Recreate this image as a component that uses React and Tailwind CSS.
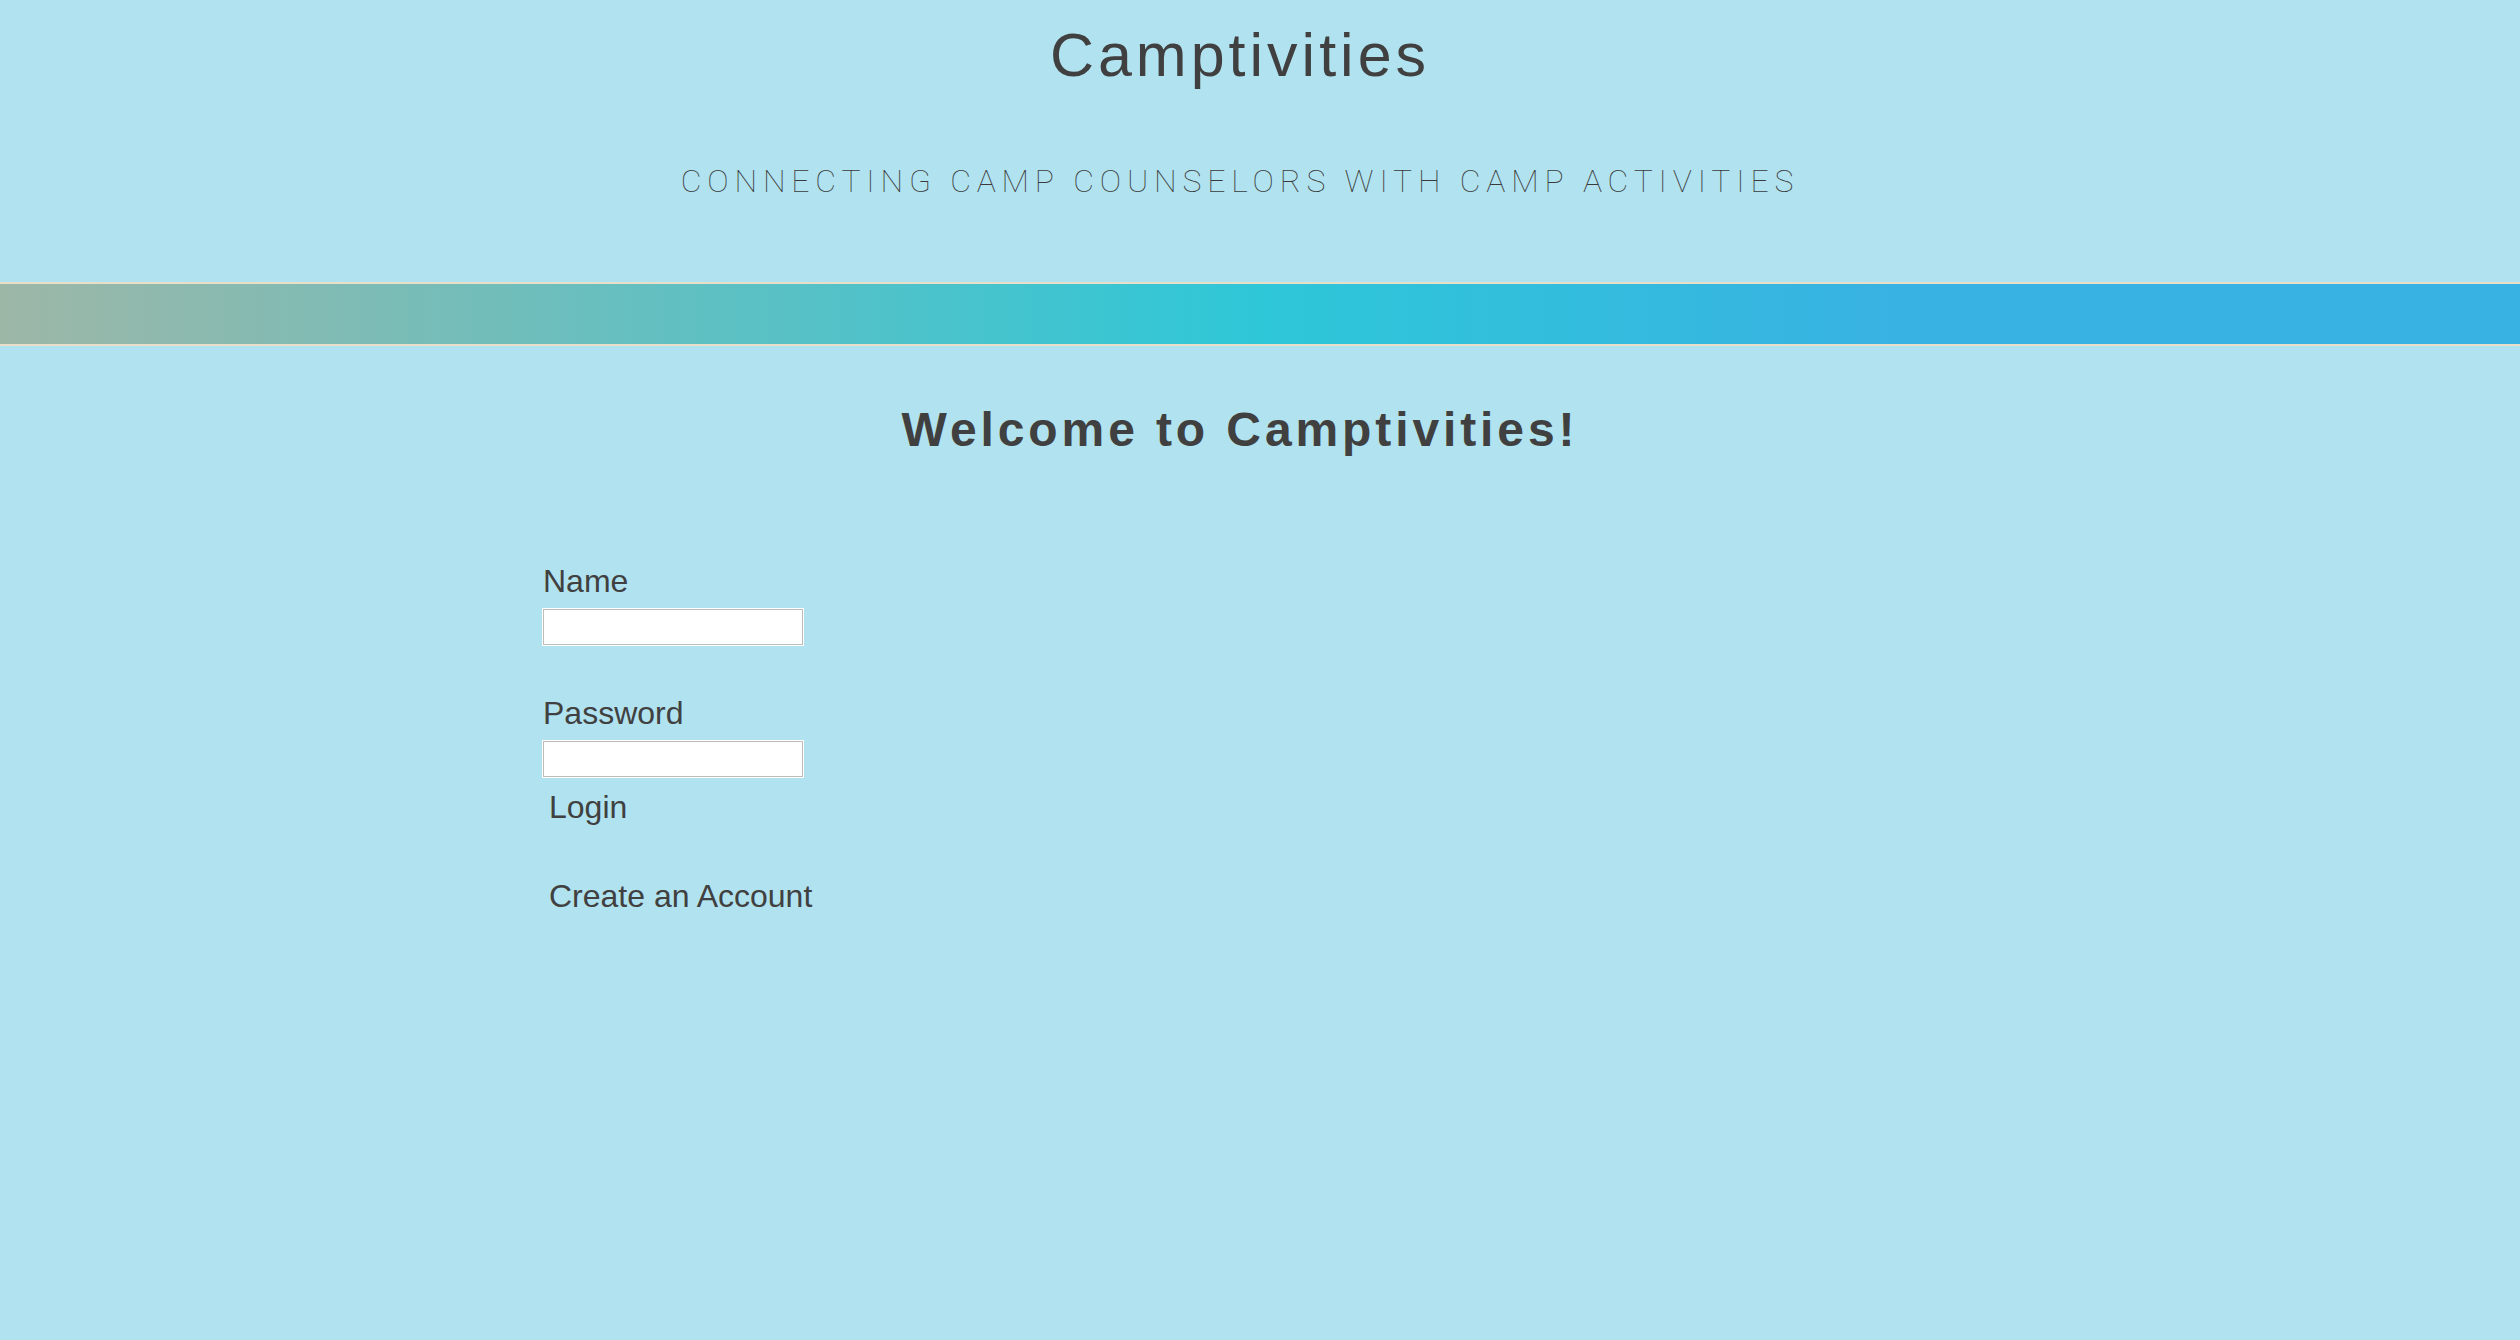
export default function App() {
  return (
    <div className="min-h-[1340px] bg-[#b1e2ef] font-['Liberation_Sans',Arial,sans-serif] text-[#404040]">
      <header className="pr-[40px] text-center">
        <h1 className="pt-[20px] text-[61px] leading-[70px] tracking-[4px]">Camptivities</h1>
        <p className="mt-[73px] font-['Roboto',sans-serif] text-[32px] font-thin leading-[36px] tracking-[5.8px] text-[#3a3a3a]">
          CONNECTING CAMP COUNSELORS WITH CAMP ACTIVITIES
        </p>
      </header>

      <div className="mt-[83px] h-[64px] border-y-2 border-[#e8dfc8] bg-[linear-gradient(90deg,#9db7a7_0%,#2ec7d8_50%,#38b2e2_75%,#38b2e2_100%)]" />

      <h2 className="mt-[56px] pr-[40px] text-center text-[48px] font-bold leading-[56px] tracking-[3.9px]">
        Welcome to Camptivities!
      </h2>

      <form className="mt-[105px] flex flex-col items-start pl-[543px]" onSubmit={(e) => e.preventDefault()}>
        <label className="text-[32px] leading-[36px]">Name</label>
        <input type="text" className="mt-[10px] h-[36px] w-[260px] border border-[#bdbdbd] bg-white ring-1 ring-white" />

        <label className="mt-[50px] text-[32px] leading-[36px]">Password</label>
        <input type="password" className="mt-[10px] h-[36px] w-[260px] border border-[#bdbdbd] bg-white ring-1 ring-white" />

        <button type="submit" className="mt-[12px] pl-[6px] text-[32px] leading-[36px]">
          Login
        </button>
        <button type="button" className="mt-[53px] pl-[6px] text-[32px] leading-[36px]">
          Create an Account
        </button>
      </form>
    </div>
  );
}
